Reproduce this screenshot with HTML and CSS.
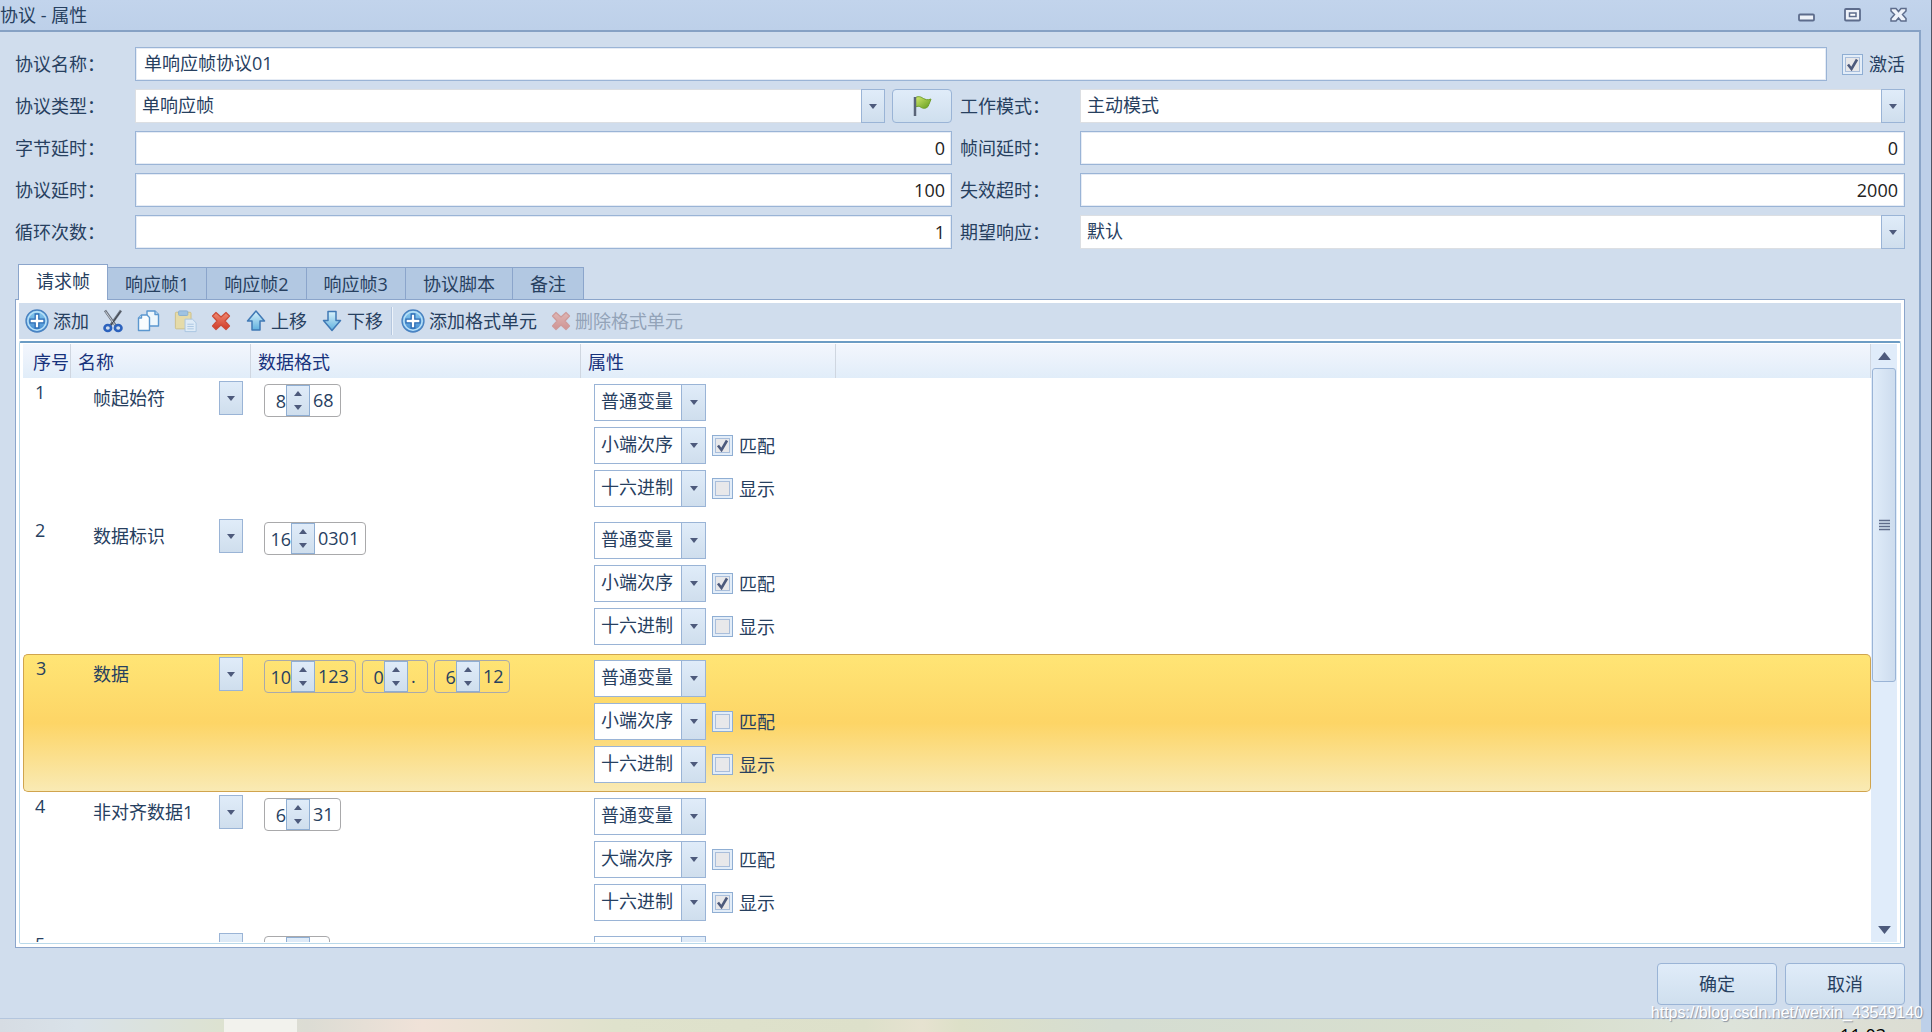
FILE: index.html
```html
<!DOCTYPE html>
<html lang="zh-CN">
<head>
<meta charset="utf-8">
<title>协议 - 属性</title>
<link rel="stylesheet" href="styles.css">
</head>
<body>
<svg class="defs" width="0" height="0" aria-hidden="true">
  <defs>
    <linearGradient id="blue" x1="0" y1="0" x2="0" y2="1"><stop offset="0" stop-color="#8ed0f2"/><stop offset="1" stop-color="#3f86cf"/></linearGradient>
    <linearGradient id="sky" x1="0" y1="0" x2="0" y2="1"><stop offset="0" stop-color="#d9f3fc"/><stop offset="1" stop-color="#5fb0de"/></linearGradient>
    <linearGradient id="red" x1="0" y1="0" x2="0" y2="1"><stop offset="0" stop-color="#f08a72"/><stop offset="1" stop-color="#d03a28"/></linearGradient>
    <linearGradient id="green" x1="0" y1="0" x2="1" y2="1"><stop offset="0" stop-color="#d3ea6c"/><stop offset="1" stop-color="#5f9a1c"/></linearGradient>
    <symbol id="down" viewBox="0 0 8 5"><path d="M0 0h8L4 5z" fill="#4d5a7c"/></symbol>
    <symbol id="up" viewBox="0 0 8 5"><path d="M0 5h8L4 0z" fill="#4d5a7c"/></symbol>
    <symbol id="plus" viewBox="0 0 24 24"><circle cx="12" cy="12" r="11" fill="url(#blue)" stroke="#4a82c0" stroke-width="1.300"/><circle cx="12" cy="12" r="9.2" fill="none" stroke="#b9e0f7" stroke-width="1.500"/><path d="M10.2 5h3.600v5.200H19v3.600h-5.200V19h-3.600v-5.200H5v-3.600h5.200z" fill="#fff" stroke="#2d6db5" stroke-width="1.300"/></symbol>
    <symbol id="cross" viewBox="0 0 20 20"><path d="M5 1.500L10 6l5-4.500L18.500 5 14 10l4.500 5-3.500 3.500L10 14l-5 4.500L1.500 15 6 10 1.500 5z" fill="url(#red)" stroke="#cc4c38" stroke-width="1.200" stroke-linejoin="round"/></symbol>
  </defs>
</svg>
<div class="window">
  <header class="titlebar">
    <h1>协议 - 属性</h1>
    <div class="caption">
      <button type="button" aria-label="最小化"><svg width="18" height="16" viewBox="0 0 18 16"><rect x="1" y="7.500" width="15" height="6" rx="1" fill="#eef2f9" stroke="#5d6c8c" stroke-width="1.800"/></svg></button>
      <button type="button" aria-label="最大化"><svg width="18" height="16" viewBox="0 0 18 16"><rect x="1" y="2" width="15" height="11.500" rx="1" fill="#eef2f9" stroke="#5d6c8c" stroke-width="1.800"/><rect x="5.500" y="6" width="6.500" height="3.500" fill="#fff" stroke="#5d6c8c" stroke-width="1.500"/></svg></button>
      <button type="button" aria-label="关闭"><svg width="18" height="16" viewBox="0 0 18 16"><path d="M1 1.500h5L8.500 4.500 11 1.500h5V4L12.500 7.500 16 11.500V14h-5L8.500 11 6 14H1V11.500L4.500 7.500 1 4z" fill="#eef2f9" stroke="#5d6c8c" stroke-width="1.500"/></svg></button>
    </div>
  </header>
  <main class="client">
    <form class="fields">
      <label for="name">协议名称：</label>
      <div class="wide">
        <input class="box" id="name" type="text" value="单响应帧协议01">
        <label class="check"><input type="checkbox" checked>激活</label>
      </div>
      <label for="type">协议类型：</label>
      <div class="pair">
        <span class="combo flat"><select id="type"><option>单响应帧</option></select><span class="arrow"><svg width="8" height="5"><use href="#down"/></svg></span></span>
        <button class="push flag" type="button" aria-label="标记"><svg width="20" height="22" viewBox="0 0 20 22"><path d="M3.500 2.500c4-2 6 0 8 1s4 2 7.500.5c-1 3-2 5-3 7.500-3 3-6 1.500-7.500.5s-3-1-5 0z" fill="url(#green)" stroke="#6f9f2a"/><path d="M3 2v19" stroke="#596478" stroke-width="2.500"/></svg></button>
      </div>
      <label class="second" for="mode">工作模式：</label>
      <span class="combo flat"><select id="mode"><option>主动模式</option></select><span class="arrow"><svg width="8" height="5"><use href="#down"/></svg></span></span>
      <label for="bytedelay">字节延时：</label>
      <input class="box num" id="bytedelay" type="text" value="0">
      <label class="second" for="framedelay">帧间延时：</label>
      <input class="box num" id="framedelay" type="text" value="0">
      <label for="protodelay">协议延时：</label>
      <input class="box num" id="protodelay" type="text" value="100">
      <label class="second" for="timeout">失效超时：</label>
      <input class="box num" id="timeout" type="text" value="2000">
      <label for="loops">循环次数：</label>
      <input class="box num" id="loops" type="text" value="1">
      <label class="second" for="expect">期望响应：</label>
      <span class="combo flat"><select id="expect"><option>默认</option></select><span class="arrow"><svg width="8" height="5"><use href="#down"/></svg></span></span>
    </form>

    <nav class="tabs" role="tablist">
      <button type="button" role="tab" aria-selected="true">请求帧</button>
      <button type="button" role="tab">响应帧1</button>
      <button type="button" role="tab">响应帧2</button>
      <button type="button" role="tab">响应帧3</button>
      <button type="button" role="tab">协议脚本</button>
      <button type="button" role="tab">备注</button>
    </nav>

    <section class="panel">
      <div class="toolbar" role="toolbar">
        <button type="button"><svg width="24" height="24"><use href="#plus"/></svg>添加</button>
        <button type="button" aria-label="剪切"><svg width="20" height="24" viewBox="0 0 20 24"><path d="M2 1.500L13 17M18 1.500L7 17" stroke="#6c7480" stroke-width="2.600"/><path d="M2.500 2.500L12 16" stroke="#c6ccd4"/><path d="M17.500 2.500L8 16" stroke="#3b424c"/><g fill="none" stroke="#2c62bd" stroke-width="2.600"><ellipse cx="4.800" cy="19" rx="3.300" ry="3"/><ellipse cx="15.200" cy="19" rx="3.300" ry="3"/></g></svg></button>
        <button type="button" aria-label="复制"><svg width="23" height="24" viewBox="0 0 23 24"><g stroke="#5b97cf" stroke-width="1.400" stroke-linejoin="round"><path d="M10 2h8l3.500 3.500V17H10z" fill="#eef7fd"/><path d="M18 2v3.500h3.500" fill="#c9e2f5"/><path d="M4.500 6H10l2.500 2.500V21.500H1.500V9z" fill="#f9fcfe"/><path d="M4.500 6v3h-3" fill="#c9e2f5"/></g></svg></button>
        <button type="button" aria-label="粘贴"><svg width="23" height="24" viewBox="0 0 25 24"><rect x="1.500" y="2.500" width="17" height="18" rx="1" fill="#e5dba9" stroke="#cdbf86"/><rect x="5" y="1" width="10" height="5" rx="1" fill="#9fc3e2" stroke="#86aed2"/><path d="M12 10h8l4 4v9.500H12z" fill="#deebf7" stroke="#a9c5e2"/><path d="M14.500 15.500h7M14.500 18h7M14.500 20.500h7" stroke="#a9c5e2"/></svg></button>
        <button type="button" aria-label="删除"><svg width="20" height="20"><use href="#cross"/></svg></button>
        <button type="button"><svg width="22" height="24" viewBox="0 0 22 24"><path d="M11 2l8.500 10H15v9H7v-9H2.500z" fill="url(#sky)" stroke="#4079b5" stroke-width="1.500" stroke-linejoin="round"/></svg>上移</button>
        <button type="button"><svg width="22" height="24" viewBox="0 0 22 24"><path d="M11 21.500L2.500 11.500H7v-9h8v9h4.500z" fill="url(#sky)" stroke="#4079b5" stroke-width="1.500" stroke-linejoin="round"/></svg>下移</button>
        <span class="sep"></span>
        <button type="button"><svg width="24" height="24"><use href="#plus"/></svg>添加格式单元</button>
        <button type="button" disabled><svg width="20" height="20"><use href="#cross"/></svg>删除格式单元</button>
      </div>

      <div class="grid">
        <div class="rows">
          <table>
            <colgroup><col class="c-no"><col class="c-name"><col class="c-format"><col class="c-props"><col></colgroup>
            <thead><tr><th>序号</th><th>名称</th><th>数据格式</th><th>属性</th><th></th></tr></thead>
            <tbody>
              <tr>
                <td class="no">1</td>
                <td class="name"><span class="combo bare"><select aria-label="名称"><option>帧起始符</option></select><span class="arrow"><svg width="8" height="5"><use href="#down"/></svg></span></span></td>
                <td class="format"><div class="units"><span class="unit"><input type="text" size="1" value="8" aria-label="长度"><span class="spin"><button type="button" aria-label="增加"><svg width="8" height="5"><use href="#up"/></svg></button><button type="button" aria-label="减少"><svg width="8" height="5"><use href="#down"/></svg></button></span><span class="value">68</span></span></div></td>
                <td class="props"><div class="stack">
                  <span class="combo"><select aria-label="变量类型"><option>普通变量</option></select><span class="arrow"><svg width="8" height="5"><use href="#down"/></svg></span></span><span></span>
                  <span class="combo"><select aria-label="字节次序"><option>小端次序</option></select><span class="arrow"><svg width="8" height="5"><use href="#down"/></svg></span></span><label class="check"><input type="checkbox" checked>匹配</label>
                  <span class="combo"><select aria-label="进制"><option>十六进制</option></select><span class="arrow"><svg width="8" height="5"><use href="#down"/></svg></span></span><label class="check"><input type="checkbox">显示</label>
                </div></td>
                <td></td>
              </tr>
              <tr>
                <td class="no">2</td>
                <td class="name"><span class="combo bare"><select aria-label="名称"><option>数据标识</option></select><span class="arrow"><svg width="8" height="5"><use href="#down"/></svg></span></span></td>
                <td class="format"><div class="units"><span class="unit two"><input type="text" size="2" value="16" aria-label="长度"><span class="spin"><button type="button" aria-label="增加"><svg width="8" height="5"><use href="#up"/></svg></button><button type="button" aria-label="减少"><svg width="8" height="5"><use href="#down"/></svg></button></span><span class="value">0301</span></span></div></td>
                <td class="props"><div class="stack">
                  <span class="combo"><select aria-label="变量类型"><option>普通变量</option></select><span class="arrow"><svg width="8" height="5"><use href="#down"/></svg></span></span><span></span>
                  <span class="combo"><select aria-label="字节次序"><option>小端次序</option></select><span class="arrow"><svg width="8" height="5"><use href="#down"/></svg></span></span><label class="check"><input type="checkbox" checked>匹配</label>
                  <span class="combo"><select aria-label="进制"><option>十六进制</option></select><span class="arrow"><svg width="8" height="5"><use href="#down"/></svg></span></span><label class="check"><input type="checkbox">显示</label>
                </div></td>
                <td></td>
              </tr>
              <tr class="selected">
                <td class="no">3</td>
                <td class="name"><span class="combo bare"><select aria-label="名称"><option>数据</option></select><span class="arrow"><svg width="8" height="5"><use href="#down"/></svg></span></span></td>
                <td class="format"><div class="units"><span class="unit two"><input type="text" size="2" value="10" aria-label="长度"><span class="spin"><button type="button" aria-label="增加"><svg width="8" height="5"><use href="#up"/></svg></button><button type="button" aria-label="减少"><svg width="8" height="5"><use href="#down"/></svg></button></span><span class="value">123</span></span><span class="unit"><input type="text" size="1" value="0" aria-label="长度"><span class="spin"><button type="button" aria-label="增加"><svg width="8" height="5"><use href="#up"/></svg></button><button type="button" aria-label="减少"><svg width="8" height="5"><use href="#down"/></svg></button></span><span class="value">.</span></span><span class="unit"><input type="text" size="1" value="6" aria-label="长度"><span class="spin"><button type="button" aria-label="增加"><svg width="8" height="5"><use href="#up"/></svg></button><button type="button" aria-label="减少"><svg width="8" height="5"><use href="#down"/></svg></button></span><span class="value">12</span></span></div></td>
                <td class="props"><div class="stack">
                  <span class="combo"><select aria-label="变量类型"><option>普通变量</option></select><span class="arrow"><svg width="8" height="5"><use href="#down"/></svg></span></span><span></span>
                  <span class="combo"><select aria-label="字节次序"><option>小端次序</option></select><span class="arrow"><svg width="8" height="5"><use href="#down"/></svg></span></span><label class="check"><input type="checkbox">匹配</label>
                  <span class="combo"><select aria-label="进制"><option>十六进制</option></select><span class="arrow"><svg width="8" height="5"><use href="#down"/></svg></span></span><label class="check"><input type="checkbox">显示</label>
                </div></td>
                <td></td>
              </tr>
              <tr>
                <td class="no">4</td>
                <td class="name"><span class="combo bare"><select aria-label="名称"><option>非对齐数据1</option></select><span class="arrow"><svg width="8" height="5"><use href="#down"/></svg></span></span></td>
                <td class="format"><div class="units"><span class="unit"><input type="text" size="1" value="6" aria-label="长度"><span class="spin"><button type="button" aria-label="增加"><svg width="8" height="5"><use href="#up"/></svg></button><button type="button" aria-label="减少"><svg width="8" height="5"><use href="#down"/></svg></button></span><span class="value">31</span></span></div></td>
                <td class="props"><div class="stack">
                  <span class="combo"><select aria-label="变量类型"><option>普通变量</option></select><span class="arrow"><svg width="8" height="5"><use href="#down"/></svg></span></span><span></span>
                  <span class="combo"><select aria-label="字节次序"><option>大端次序</option></select><span class="arrow"><svg width="8" height="5"><use href="#down"/></svg></span></span><label class="check"><input type="checkbox">匹配</label>
                  <span class="combo"><select aria-label="进制"><option>十六进制</option></select><span class="arrow"><svg width="8" height="5"><use href="#down"/></svg></span></span><label class="check"><input type="checkbox" checked>显示</label>
                </div></td>
                <td></td>
              </tr>
              <tr>
                <td class="no">5</td>
                <td class="name"><span class="combo bare"><select aria-label="名称"></select><span class="arrow"></span></span></td>
                <td class="format"><div class="units"><span class="unit"><input type="text" size="1" aria-label="长度"><span class="spin"></span><span class="value"></span></span></div></td>
                <td class="props"><div class="stack"><span class="combo"><select aria-label="变量类型"></select><span class="arrow"></span></span></div></td>
                <td></td>
              </tr>
            </tbody>
          </table>
        </div>
        <div class="scrollbar">
          <button type="button" aria-label="向上滚动"><svg width="13" height="8" viewBox="0 0 8 5"><use href="#up"/></svg></button>
          <div class="track"><div class="thumb"><svg width="11" height="12" viewBox="0 0 11 12"><path d="M0 1.500h11M0 4.500h11M0 7.500h11M0 10.500h11" stroke="#5f6c8b" stroke-width="1.300"/></svg></div></div>
          <button type="button" aria-label="向下滚动"><svg width="13" height="8" viewBox="0 0 8 5"><use href="#down"/></svg></button>
        </div>
      </div>
    </section>

    <footer class="actions">
      <button class="push" type="button">确定</button>
      <button class="push" type="button">取消</button>
    </footer>
  </main>
  <div class="taskbar"><span class="task"></span><span class="clock">11:03</span></div>
</div>
<p class="watermark">https://blog.csdn.net/weixin_43549140</p>
</body>
</html>
```
FILE: styles.css
```css
* { box-sizing: border-box; }
body, button, input, select {
  font: 18px/24px "Open Sans", "Noto Sans CJK SC", sans-serif;
  color: #27405f;
}
body { margin: 0; height: 100vh; overflow: hidden; background: #bdd0e9; }
button, input, select { margin: 0; padding: 0; border: 0; background: none; outline: 0; }
select { appearance: none; }
svg { display: block; flex: none; }
.defs { position: absolute; }

.window {
  height: 100vh;
  display: flex;
  flex-direction: column;
  padding-right: 10px;
  background: linear-gradient(#c2d4ec, #bdd0e9 30px);
  border-right: 1px solid #4f5565;
}
.titlebar { height: 30px; flex: none; display: flex; justify-content: space-between; align-items: center; padding-right: 13px; }
.titlebar h1 { margin: 0; font-size: 18px; line-height: 24px; font-weight: 400; }
.caption { display: flex; gap: 28px; }

.client {
  flex: 1;
  min-height: 0;
  display: flex;
  flex-direction: column;
  padding: 15px 14px 13px 15px;
  background: #d0dded;
  border-top: 2px solid #86a1c4;
  border-right: 2px solid #8aa5c8;
  border-bottom: 1px solid #b4c6de;
}

.fields {
  display: grid;
  grid-template-columns: 120px minmax(0, 817fr) 128px minmax(0, 825fr);
  grid-auto-rows: 34px;
  row-gap: 8px;
  align-items: center;
}
.fields > label { white-space: nowrap; }
.second { padding-left: 8px; }
.wide { grid-column: 2 / -1; display: flex; gap: 15px; }
.pair { display: flex; gap: 7px; }
.pair .combo { flex: 1; }
.box { width: 100%; min-width: 0; height: 34px; padding: 0 6px 4px 8px; background: #fff; border: 1px solid #9ab4d6; box-shadow: inset 0 0 0 1px #e6ecf5; }
.num { padding-bottom: 1px; text-align: right; color: #222; }

.check { display: flex; align-items: center; gap: 6px; white-space: nowrap; }
.check input {
  appearance: none;
  flex: none;
  width: 21px;
  height: 21px;
  border: 1px solid #8faed3;
  box-shadow: inset 0 0 0 2px #e3edf8, inset 0 0 0 3px #a9bedb;
  background: #e8e8ea;
}
.check input:checked { background: #e8e8ea url("data:image/svg+xml,%3Csvg xmlns='http://www.w3.org/2000/svg' viewBox='0 0 19 19'%3E%3Cpath d='M5 9.500L8.500 14 14 4.500' fill='none' stroke='%234d5a7c' stroke-width='2.600'/%3E%3C/svg%3E") center / 19px no-repeat; }

.combo { display: grid; grid-template-columns: minmax(0, 1fr) 24px; height: 37px; border: 1px solid #9ab4d6; background: #fff; }
.combo select { grid-area: 1 / 1 / 2 / 3; padding: 0 30px 4px 6px; }
.arrow {
  grid-area: 1 / 2;
  display: grid;
  place-items: center;
  pointer-events: none;
  border-left: 1px solid #9ab4d6;
  background: linear-gradient(#e0ecf9, #cfdeed);
}
.flat { height: 34px; border: 0; box-shadow: inset 0 0 0 1px #dcdfe3; }
.flat select { padding: 0 30px 3px 7px; }
.flat .arrow, .bare .arrow { border: 1px solid #9ab4d6; }
.bare { height: 34px; border: 0; background: none; }
.bare select { padding: 0 30px 0 0; }

.push {
  height: 42px;
  width: 120px;
  border: 1px solid #9ab4d6;
  border-radius: 4px;
  background: linear-gradient(#e0ecf9, #cfdfee);
}
.flag { width: 60px; height: 34px; display: grid; place-items: center; }

.tabs { display: flex; align-items: flex-end; padding-left: 3px; margin-top: 15px; position: relative; }
.tabs button { height: 32px; padding: 0 17px; background: #b2c8e2; border: solid #8ba5cb; border-width: 1px 1px 0 0; }
.tabs [aria-selected] { height: 36px; margin-bottom: -1px; padding: 0 17px 4px; background: #fff; border-width: 1px 1px 0 1px; }

.panel {
  flex: 1;
  min-height: 0;
  display: flex;
  flex-direction: column;
  padding: 3px;
  background: #fff;
  border: 1px solid #8ba5cb;
}
.toolbar { height: 36px; flex: none; display: flex; align-items: center; gap: 14px; padding-left: 6px; margin-bottom: 2px; background: #d0dded; }
.toolbar button { display: flex; align-items: center; gap: 4px; white-space: nowrap; }
.toolbar button:disabled { color: #93a3b8; }
.toolbar button:disabled svg { opacity: 0.450; }
.sep { width: 2px; height: 28px; margin: 0 -6px; background: linear-gradient(90deg, #b5c7df 50%, #edf3fa 50%); }

.grid {
  flex: 1;
  min-height: 0;
  display: flex;
  padding: 1px 3px 1px 3px;
  border: 1px solid #b9d9ea;
  border-top: 2px solid #6c9cc4;
  border-radius: 2px;
}
.rows { flex: 1; min-width: 0; overflow: hidden; }
table { width: 100%; table-layout: fixed; border-collapse: separate; border-spacing: 0; }
.c-no { width: 48px; }
.c-name { width: 180px; }
.c-format { width: 330px; }
.c-props { width: 255px; }
th {
  height: 34px;
  padding: 2px 0 0 7px;
  text-align: left;
  font-weight: 400;
  color: #17327c;
  white-space: nowrap;
  background: linear-gradient(#f3f6fd, #e1edf9);
  border-right: 1px solid #cfd6e0;
}
th:first-child { padding-left: 10px; }
td { height: 138px; padding: 0; vertical-align: top; border: 0 solid transparent; border-top-width: 1px; }
td.no { padding: 1px 0 0 12px; }
td.name { padding: 2px 8px 0 22px; }
td.format { padding: 5px 0 0 13px; }
td.props { padding: 5px 0 0 13px; }
.selected td { background: linear-gradient(#ffe575, #fdd566 50%, #f9eab4); border: 0 solid #d0a44e; border-width: 1px 0; }
.selected td:first-child { border-left-width: 1px; border-radius: 5px 0 0 5px; }
.selected td:last-child { border-right-width: 1px; border-radius: 0 5px 5px 0; }

.stack { display: grid; grid-template-columns: 112px auto; justify-content: start; align-items: center; gap: 6px; }
.units { display: flex; gap: 6px; }
.unit { display: flex; height: 33px; border: 1px solid #a9a9ab; border-radius: 4px; background: #fff; }
.selected .unit { background: none; }
.unit input { width: 21px; text-align: right; }
.unit.two input { width: 26px; }
.spin { width: 24px; display: grid; grid-template-rows: 1fr 1fr; border: 1px solid #8faed3; background: linear-gradient(#e0ecf9, #cfdeed); }
.spin button { display: grid; place-items: center; }
.value { min-width: 19px; padding: 3px 6px 0 3px; }

.scrollbar { width: 26px; display: flex; flex-direction: column; background: #e0ecfa; }
.scrollbar button { height: 24px; flex: none; display: grid; place-items: center; }
.track { flex: 1; padding: 0 1px; }
.thumb { height: 57%; display: grid; place-items: center; border: 1px solid #9ab4d6; border-radius: 3px; background: linear-gradient(90deg, #e0ecf9, #cddcee); }

.actions { display: flex; justify-content: flex-end; gap: 8px; padding-top: 15px; }

.taskbar {
  height: 13px;
  flex: none;
  overflow: hidden;
  display: flex;
  justify-content: space-between;
  padding: 0 35px 0 224px;
  background: linear-gradient(90deg, #d6dce3, #d9e2e9 4%, #dde2cf 12%, #dcdcd4 16%, #f0e2d8 22%, #dfe2cc 32%, #dde0ca 45%, #e6e2d0 48%, #dde0c8 50%, #d5ddd2 58%, #d8dfcd 80%, #dde3da 90%, #dcddd3);
}
.task { width: 73px; background: #f2f2ed; }
.clock { padding-top: 4px; color: #000; }

.watermark {
  position: absolute;
  right: 9px;
  bottom: 7px;
  margin: 0;
  font: 16px/24px "Liberation Sans", sans-serif;
  color: #fff;
  text-shadow: 1px 1px 1px #8a93a0;
}
```
